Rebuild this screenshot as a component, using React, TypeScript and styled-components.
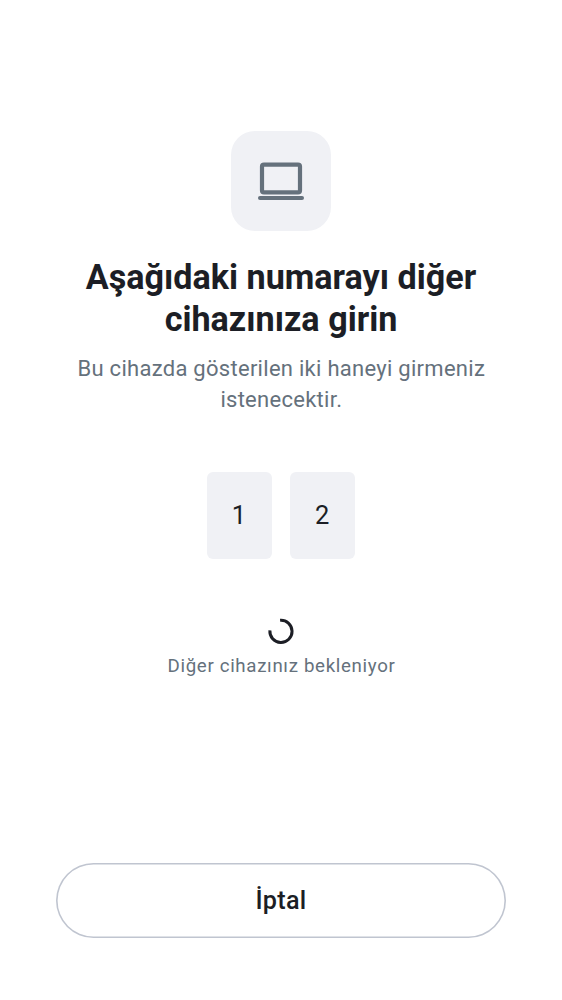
import React from 'react';
import styled, { createGlobalStyle } from 'styled-components';

const Global = createGlobalStyle`
  * { box-sizing: border-box; }
  body { margin: 0; background: #fff; font-family: Roboto, "Liberation Sans", sans-serif; }
`;
const Screen = styled.main`
  height: 1000px;
  padding: 131px 56px 62px;
  display: flex;
  flex-direction: column;
  align-items: center;
  text-align: center;
  color: #1c1e25;
`;
const IconTile = styled.div`
  width: 100px;
  height: 100px;
  border-radius: 24px;
  background: #f0f1f5;
  display: flex;
  flex-shrink: 0;
`;
const Title = styled.h1`
  margin: 25px 0 0;
  font-size: 34.15px;
  line-height: 42px;
  font-weight: 700;
`;
const Subtitle = styled.p`
  margin: 13px 0 0;
  padding-left: 0.6px;
  font-size: 22px;
  line-height: 31px;
  letter-spacing: 0.28px;
  color: #65717c;
`;
const Digits = styled.div`
  margin-top: 57px;
  display: flex;
  gap: 18px;
`;
const Digit = styled.div`
  width: 65.4px;
  height: 87px;
  border-radius: 6px;
  background: #f0f1f5;
  font-size: 25.5px;
  line-height: 87px;
  padding-right: 1px;
`;
const Spinner = styled.svg`
  margin-top: 58px;
  display: block;
  flex-shrink: 0;
`;
const Status = styled.p`
  margin: 8px 0 0;
  padding-left: 1px;
  font-size: 18.7px;
  line-height: 26px;
  letter-spacing: 0.67px;
  color: #65717c;
`;
const CancelButton = styled.button`
  width: 450px;
  height: 75px;
  margin-top: auto;
  border: 0;
  border-radius: 38px;
  box-shadow: inset 0 0 0 1.6px #c0c5d0;
  background: #fff;
  color: #1c1e25;
  font: 500 25.2px/30px Roboto, "Liberation Sans", sans-serif;
  letter-spacing: 0.3px;
`;

export default function App() {
  return (
    <>
      <Global />
      <Screen>
        <IconTile>
          <svg width="100" height="100" viewBox="0 0 100 100" fill="none" stroke="#65717c" strokeWidth="4">
            <rect x="31" y="33.6" width="38" height="27.8" rx="2" strokeWidth="4.2" />
            <path d="M29 67H71" strokeLinecap="round" />
          </svg>
        </IconTile>
        <Title>Aşağıdaki numarayı diğer<br />cihazınıza girin</Title>
        <Subtitle>Bu cihazda gösterilen iki haneyi girmeniz<br />istenecektir.</Subtitle>
        <Digits>
          <Digit>1</Digit>
          <Digit>2</Digit>
        </Digits>
        <Spinner width="28" height="28" viewBox="0 0 28 28" fill="none">
          <path d="M13.1 3.3A11.1 11.1 0 1 1 2.9 13.4" stroke="#1c1e25" strokeWidth="3" />
        </Spinner>
        <Status>Diğer cihazınız bekleniyor</Status>
        <CancelButton>İptal</CancelButton>
      </Screen>
    </>
  );
}
